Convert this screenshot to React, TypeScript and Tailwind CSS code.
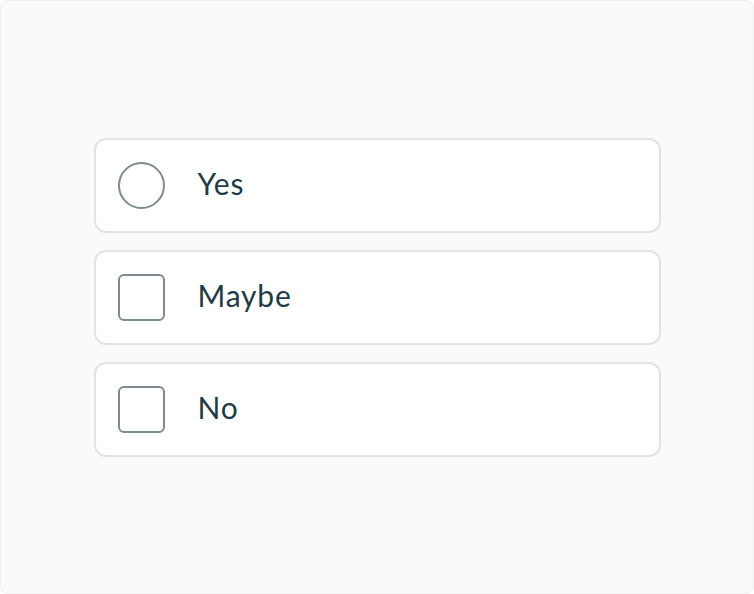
const OPTIONS = [
  { label: "Yes", kind: "radio" as const },
  { label: "Maybe", kind: "check" as const },
  { label: "No", kind: "check" as const },
];

function Marker({ kind }: { kind: "radio" | "check" }) {
  return (
    <span
      className={
        kind === "radio"
          ? "h-[47px] w-[47px] shrink-0 rounded-full border-2 border-[#7c8b90] bg-white"
          : "h-[47px] w-[47px] shrink-0 rounded-[6px] border-2 border-[#7c8b90] bg-white"
      }
      aria-hidden
    />
  );
}

export default function App() {
  return (
    <div className="flex h-[594px] w-[754px] items-center justify-center rounded-[8px] border border-[#efefef] bg-[#fafafa] font-['Lato','Noto_Sans',sans-serif]">
      <ul className="flex w-[567px] flex-col gap-[17px]">
        {OPTIONS.map((opt) => (
          <li
            key={opt.label}
            className="flex h-[95px] items-center gap-[33px] rounded-[12px] border-2 border-[#e0e2e3] bg-white pl-[22px]"
          >
            <Marker kind={opt.kind} />
            <span className="pb-[5px] text-[30px] leading-none tracking-[0.8px] text-[#1f3b47]">
              {opt.label}
            </span>
          </li>
        ))}
      </ul>
    </div>
  );
}
